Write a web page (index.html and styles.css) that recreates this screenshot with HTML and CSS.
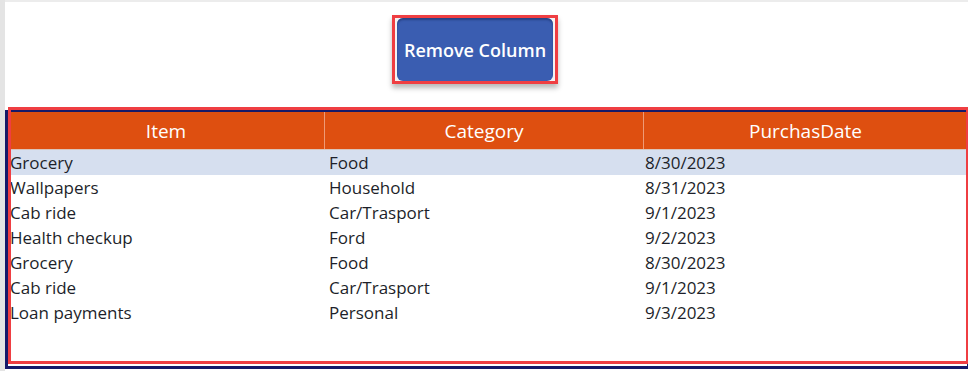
FILE: index.html
```html
<!DOCTYPE html>
<html>
<head>
<meta charset="utf-8">
<link rel="stylesheet" href="styles.css">
</head>
<body>
<div class="page">
  <div class="side-strip"></div>
  <div class="main">
    <div class="top-line"></div>
    <div class="toolbar">
      <div class="btn-frame">
        <button class="btn">Remove Column</button>
      </div>
    </div>
    <div class="grid-area">
      <div class="grid">
        <div class="row head">
          <div class="cell">Item</div>
          <div class="cell">Category</div>
          <div class="cell">PurchasDate</div>
        </div>
        <div class="row selected">
          <div class="cell">Grocery</div>
          <div class="cell">Food</div>
          <div class="cell">8/30/2023</div>
        </div>
        <div class="row">
          <div class="cell">Wallpapers</div>
          <div class="cell">Household</div>
          <div class="cell">8/31/2023</div>
        </div>
        <div class="row">
          <div class="cell">Cab ride</div>
          <div class="cell">Car/Trasport</div>
          <div class="cell">9/1/2023</div>
        </div>
        <div class="row">
          <div class="cell">Health checkup</div>
          <div class="cell">Ford</div>
          <div class="cell">9/2/2023</div>
        </div>
        <div class="row">
          <div class="cell">Grocery</div>
          <div class="cell">Food</div>
          <div class="cell">8/30/2023</div>
        </div>
        <div class="row">
          <div class="cell">Cab ride</div>
          <div class="cell">Car/Trasport</div>
          <div class="cell">9/1/2023</div>
        </div>
        <div class="row">
          <div class="cell">Loan payments</div>
          <div class="cell">Personal</div>
          <div class="cell">9/3/2023</div>
        </div>
      </div>
      <div class="annot"></div>
    </div>
  </div>
</div>
</body>
</html>
```

FILE: styles.css
```css
html, body {
  margin: 0;
  padding: 0;
  background: #ffffff;
}
body {
  width: 968px;
  height: 371px;
  overflow: hidden;
  font-family: "Open Sans", "Noto Sans", sans-serif;
}
.page {
  display: flex;
  height: 371px;
}
.side-strip {
  width: 5px;
  flex: none;
  background: #e4e4e4;
}
.main {
  flex: 1;
  display: flex;
  flex-direction: column;
}
.top-line {
  height: 2px;
  background: #ececec;
}
.toolbar {
  height: 108px;
  padding-top: 13px;
  padding-left: 387px;
  box-sizing: border-box;
}
.btn-frame {
  width: 166px;
  height: 69px;
  box-sizing: border-box;
  border: 3px solid #ef3e42;
  padding: 0 2px 0 2px;
  box-shadow: 0 4px 5px rgba(0, 0, 0, 0.28);
  background: #f3f3f3;
}
.btn {
  display: block;
  width: 156px;
  height: 63px;
  border: none;
  border-radius: 6px;
  background: #3a5db1;
  box-shadow: inset 0 2px 2px rgba(20, 40, 90, 0.5);
  color: #ffffff;
  font-family: "Open Sans", "Noto Sans", sans-serif;
  font-weight: 600;
  font-size: 18px;
  padding: 0;
  cursor: pointer;
}
.grid-area {
  position: relative;
  margin-top: 0;
}
.grid {
  border: 3px solid #15196a;
  border-top-width: 2px;
  border-right-width: 1px;
  height: 259px;
  box-sizing: border-box;
}
.row {
  display: grid;
  grid-template-columns: 316px 319px 1fr;
  height: 25px;
  align-items: center;
  font-size: 17px;
  color: #1d1f2a;
}
.row .cell {
  padding-left: 2px;
  white-space: nowrap;
}
.row .cell:nth-child(2) {
  padding-left: 5px;
}
.row.head {
  height: 37px;
  background: #de4f10;
  color: #ffffff;
  font-size: 19px;
  align-items: stretch;
  box-shadow: 0 1px 2px rgba(120, 40, 0, 0.4);
}
.row.head .cell {
  padding-left: 0;
  display: flex;
  align-items: center;
  justify-content: center;
  border-left: 1px solid #ee9a76;
}
.row.head .cell:first-child {
  border-left: none;
}
.row.selected {
  background: #d6dfef;
  margin-top: 1px;
}
.annot {
  position: absolute;
  left: 3px;
  top: -3px;
  width: 961px;
  height: 257px;
  box-sizing: border-box;
  border: 3px solid #ef3e42;
  pointer-events: none;
}
```
